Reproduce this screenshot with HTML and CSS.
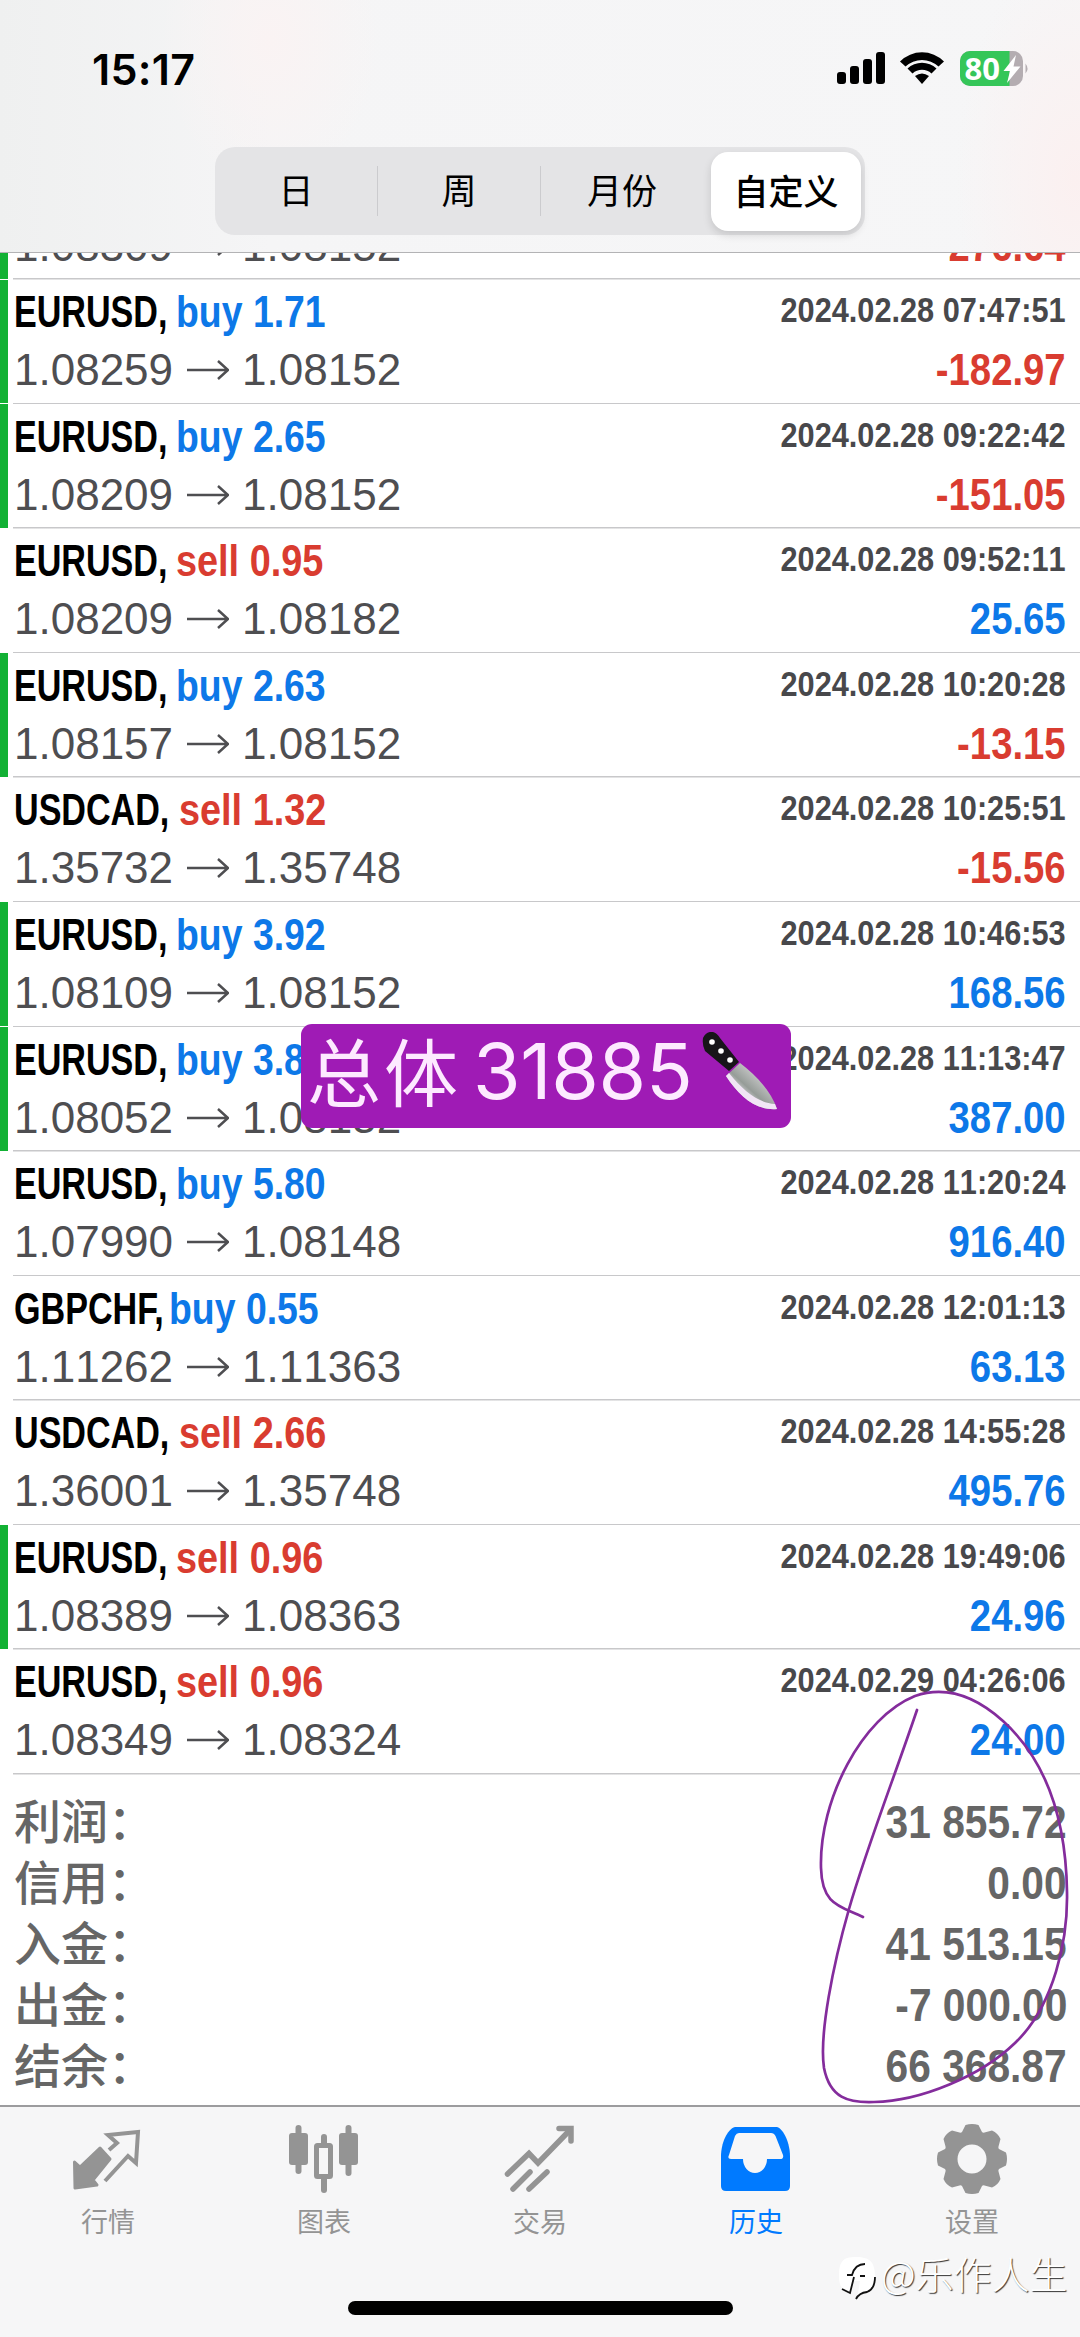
FILE: index.html
```html
<!DOCTYPE html>
<html lang="zh-CN">
<head>
<meta charset="utf-8">
<title>历史</title>
<link rel="stylesheet" href="styles.css">
</head>
<body>
<div class="screen">
  <header class="top">
    <div class="status">
      <span class="clock">15:17</span>
      <svg class="status-icons" width="194" height="38" viewBox="0 0 194 38">
        <rect x="1" y="22" width="9" height="12" rx="3"/><rect x="14" y="16" width="9" height="18" rx="3"/><rect x="27" y="9" width="9" height="25" rx="3"/><rect x="40" y="2" width="9" height="32" rx="3"/>
        <path d="M64 11.500A31 31 0 0 1 108 11.500L102.500 16.500A24 24 0 0 0 69.500 16.500ZM71.500 18.500A21 21 0 0 1 100.500 18.500L95.500 23.500A14 14 0 0 0 76.500 23.500ZM79 26Q86 21 93 26L86 34Z"/>
        <rect x="124" y="1" width="63" height="35" rx="10" fill="#b4adb1"/>
        <path d="M134 1H173.500V36H134A10 10 0 0 1 124 26V11A10 10 0 0 1 134 1Z" fill="#35c659"/>
        <path d="M189.500 13.500Q193.500 18.500 189.500 23.500Z" fill="#b4adb1"/>
        <text x="128.500" y="29.500" class="battery-text">80</text>
        <path d="M180 5L167.500 21H174L171 33L184.500 16.500H177.500Z" fill="#fff"/>
      </svg>
    </div>
    <nav class="segments">
      <span class="segment">日</span><i></i><span class="segment">周</span><i></i><span class="segment">月份</span><span class="segment selected">自定义</span>
    </nav>
  </header>

  <main class="history">
    <ul class="deals" id="deals"></ul>
    <dl class="summary">
      <div><dt>利润：</dt><dd>31 855.72</dd></div>
      <div><dt>信用：</dt><dd>0.00</dd></div>
      <div><dt>入金：</dt><dd>41 513.15</dd></div>
      <div><dt>出金：</dt><dd>-7 000.00</dd></div>
      <div><dt>结余：</dt><dd>66 368.87</dd></div>
    </dl>
  </main>

  <footer class="tabs">
    <nav class="tab-row">
      <a class="tab"><svg width="72" height="72" viewBox="0 0 72 72"><path fill="currentColor" stroke="currentColor" stroke-width="3" stroke-linejoin="round" d="M28 25L38 36L21 57L25 62L3 65L2.500 39L8 44Z"/><path fill="none" stroke="currentColor" stroke-width="4" d="M37 27L45 20L36 12L66 9L64 40L56 33L33 58"/></svg>行情</a>
      <a class="tab"><svg width="72" height="72" viewBox="0 0 72 72" fill="currentColor"><rect x="1" y="10" width="19" height="32" rx="3"/><rect x="7.500" y="2" width="6" height="49" rx="3"/><rect x="51" y="10" width="19" height="32" rx="3"/><rect x="57.500" y="2" width="6" height="51" rx="3"/><rect x="33" y="11" width="6" height="14" rx="3"/><rect x="33" y="52" width="6" height="18" rx="3"/><rect x="28.500" y="22.500" width="14" height="31" rx="1" fill="none" stroke="currentColor" stroke-width="5"/></svg>图表</a>
      <a class="tab"><svg width="72" height="72" viewBox="0 0 72 72" fill="none" stroke="currentColor" stroke-width="5.500" stroke-linecap="round"><path stroke-linejoin="miter" d="M3.500 51L25 30.500L34 40L66 7"/><path stroke-linejoin="miter" d="M55 5.500H67V18M9 66L26 49M25 66L43 49"/></svg>交易</a>
      <a class="tab active"><svg width="72" height="72" viewBox="0 0 72 72"><path fill="currentColor" d="M15 4H57C64 6 70 21 70 33V63Q70 68 65 68H6Q1 68 1 63V33C1 21 7 6 15 4Z"/><path fill="#f6f6f7" d="M19 10H51Q54 10 55.500 13L63 32Q64 36 60 36H47A12 14 0 0 1 23 36H11Q7 36 9 32L15 13Q16.500 10 19 10Z"/></svg>历史</a>
      <a class="tab"><svg width="72" height="72" viewBox="-36 -36 72 72"><path fill="currentColor" fill-rule="evenodd" d="M-6.500 -34Q0 -36 6.500 -34L10 -27Q11 -26 12.500 -26.500L20 -28.500Q26 -26 28.500 -20L26.500 -12.500Q26 -11 27 -10L34 -6.500Q36 0 34 6.500L27 10Q26 11 26.500 12.500L28.500 20Q26 26 20 28.500L12.500 26.500Q11 26 10 27L6.500 34Q0 36 -6.500 34L-10 27Q-11 26 -12.500 26.500L-20 28.500Q-26 26 -28.500 20L-26.500 12.500Q-26 11 -27 10L-34 6.500Q-36 0 -34 -6.500L-27 -10Q-26 -11 -26.500 -12.500L-28.500 -20Q-26 -26 -20 -28.500L-12.500 -26.500Q-11 -26 -10 -27ZM14.500 0A14.500 14.500 0 1 0 -14.500 0A14.500 14.500 0 1 0 14.500 0Z"/></svg>设置</a>
    </nav>
    <div class="home-bar"></div>
  </footer>

  <div class="note"><span class="note-label">总体</span><span class="note-number">31885</span>
    <svg class="knife" width="78" height="80" viewBox="0 0 78 80">
      <defs><linearGradient id="blade" x1="0" y1="1" x2="1" y2="0"><stop offset="0.300" stop-color="#e2dfe5"/><stop offset="0.450" stop-color="#969c98"/><stop offset="0.700" stop-color="#c8c9c9"/></linearGradient></defs>
      <path d="M38 31C53 42 69 59 75 77C54 79 37 64 24 44Z" fill="url(#blade)"/>
      <path d="M24 44C37 64 54 79 75 77L73 72C57 71 42 60 27 41Z" fill="#f1e5f5"/>
      <path d="M1 6Q4 -1 11 0Q15 1 18 6L37 30L27 39L3 19Q0 13 1 6Z" fill="#171519"/>
      <g fill="#fff"><circle cx="10" cy="10" r="2.800"/><circle cx="19" cy="19" r="2.800"/><circle cx="28" cy="28" r="2.800"/></g>
    </svg>
  </div>
  <svg class="scribble" width="260" height="426" viewBox="0 0 260 426"><path d="M107 20C85 85 56 160 39 219C23 275 9 345 14 378C20 408 38 413 64 412C111 411 171 386 205 353C244 316 258 250 257 202C256 130 236 70 193 31C163 4 134 -4 105 6C52 27 9 110 11 178C12 216 31 216 53 227" fill="none" stroke="#842c9c" stroke-width="2.700" stroke-linecap="round"/></svg>
  <div class="watermark">
    <svg width="40" height="46" viewBox="0 0 40 46"><path d="M19 2C34 2 38 8 38 22Q38 34 30 37Q24 39 20 44L23 26H17L14 38Q2 36 2 22C2 7 5 2 19 2Z" fill="#fff"/><path d="M10 20H15Q18 9 28 9M23 21H28M17 22L13 38L5 34M38 22Q38 34 30 37Q22 38 19 44" fill="none" stroke="#111" stroke-width="1.800"/></svg><span>@乐作人生</span>
  </div>
</div>
<script src="deals.js"></script>
</body>
</html>
```
FILE: styles.css
```css
* { box-sizing: border-box; }
body { margin: 0; background: #fff; font-family: "Liberation Sans", "Noto Sans CJK SC", sans-serif; font-kerning: none; }
.screen { position: relative; display: flex; flex-direction: column; width: 1080px; height: 2337px; overflow: hidden; background: #fff; }
.top { flex: none; height: 253px; border-bottom: 1px solid #b3b3b5; background: radial-gradient(ellipse 120px 230px at 1075px 180px, #fbf0f0, transparent), radial-gradient(ellipse 110px 150px at 270px 40px, #faf3f3, transparent), linear-gradient(90deg, #eff0f0, #f5f5f6 25%, #f6f6f7); }
.status { display: flex; justify-content: space-between; height: 147px; padding: 50px 50px 0 92px; }
.clock { font: 600 43px/38px Inter, sans-serif; letter-spacing: .3px; }
.battery-text { font: 700 31px "Noto Sans", sans-serif; fill: #fff; }
.segments { display: flex; align-items: center; width: 650px; height: 88px; margin: 0 auto; padding: 4px 4px 4px 0; border-radius: 20px; background: #e4e4e6; font: 400 35px/56px "Noto Sans CJK SC", sans-serif; }
.segments i { width: 1px; height: 50px; background: #cbcbce; }
.segment { flex: 0 0 162px; padding-bottom: 4px; text-align: center; }
.segment.selected { flex: 0 0 150px; margin-left: auto; height: 79px; line-height: 76px; border-radius: 17px; background: #fff; font-weight: 500; box-shadow: 0 4px 8px #0002; }
.history { flex: 1; overflow: hidden; }
.deals { margin: -98px 0 0; padding: 0; list-style: none; }
.deal { display: flex; justify-content: space-between; height: 124.580px; padding: 12.500px 14px 0 14px; background: linear-gradient(#c8c8ca, #c8c8ca) 13px 100% / 1067px 1.500px no-repeat; }
.deal.marked { background: linear-gradient(#fff, #fff) 0 100% / 8px 1px no-repeat, linear-gradient(#12b134, #12b134) 0 0 / 8px 100% no-repeat, linear-gradient(#c8c8ca, #c8c8ca) 13px 100% / 1067px 1.500px no-repeat; }
.title { display: flex; height: 58px; font: 700 44px/40px "Liberation Sans", sans-serif; white-space: pre; }
.title span { display: block; transform-origin: 0 50%; }
.symbol { transform: scaleX(.775); color: #000; }
.eurusd { width: 162px; }
.usdcad { width: 165px; }
.gbpchf { width: 155px; }
.side { transform: scaleX(.85); }
.side.sell { transform: scaleX(.86); }
.buy, .gain { color: #0d78e8; }
.sell, .loss { color: #d93c30; }
.prices { display: flex; align-items: center; color: #4e4e51; font-size: 44px; line-height: 40px; }
.prices svg { margin: 0 13px 0 14px; }
.right { text-align: right; font-weight: 700; white-space: nowrap; }
.right div { transform-origin: 100% 50%; transform: scaleX(.87); }
.right .date { height: 58px; font-size: 35.500px; line-height: 37px; color: #48484b; transform: scaleX(.865); }
.result { font-size: 44px; line-height: 40px; }
.summary { margin: 0; padding: 17px 13px 0 14px; color: #666; }
.summary div { display: flex; justify-content: space-between; height: 61px; line-height: 61px; }
.summary dt { font: 500 47px/54px "Noto Sans CJK SC", sans-serif; }
.summary dd { margin: 0; font-weight: 700; font-size: 46px; transform: scaleX(.885); transform-origin: 100% 50%; }
.tabs { flex: none; height: 232px; border-top: 2px solid #9c9c9e; background: #f6f6f7; }
.tab-row { display: flex; height: 194px; padding-top: 16px; }
.tab { display: flex; flex: 1; flex-direction: column; align-items: center; gap: 6px; color: #949494; font: 400 27px/40px "Noto Sans CJK SC", sans-serif; }
.tab.active { color: #007aff; }
.home-bar { width: 385px; height: 14px; margin: 0 auto; border-radius: 7px; background: #000; }
.note { position: absolute; left: 301px; top: 1024px; display: flex; width: 490px; height: 104px; padding-left: 6px; border-radius: 11px; background: #9f1bb5; color: #fdeaff; white-space: nowrap; }
.note-label { width: 166px; font: 400 74px/90px "Noto Sans CJK SC", sans-serif; letter-spacing: 3px; }
.note-number { width: 229px; font: 400 77px/94px Inter, sans-serif; letter-spacing: -.3px; }
.knife { flex: none; margin-top: 8px; }
.scribble { position: absolute; left: 810px; top: 1690px; }
.watermark { position: absolute; left: 837px; top: 2255px; display: flex; gap: 4px; color: #fff; font: 300 38px/36px "Noto Sans CJK SC", sans-serif; text-shadow: 1px 1px 1px #333; white-space: nowrap; }
```
FILE: deals.js
```javascript
const deals = [
  ["EURUSD", "buy", "2.63", "1.08309", "1.08152", "2024.02.28 06:31:20", "-276.64", true],
  ["EURUSD", "buy", "1.71", "1.08259", "1.08152", "2024.02.28 07:47:51", "-182.97", true],
  ["EURUSD", "buy", "2.65", "1.08209", "1.08152", "2024.02.28 09:22:42", "-151.05", true],
  ["EURUSD", "sell", "0.95", "1.08209", "1.08182", "2024.02.28 09:52:11", "25.65", false],
  ["EURUSD", "buy", "2.63", "1.08157", "1.08152", "2024.02.28 10:20:28", "-13.15", true],
  ["USDCAD", "sell", "1.32", "1.35732", "1.35748", "2024.02.28 10:25:51", "-15.56", false],
  ["EURUSD", "buy", "3.92", "1.08109", "1.08152", "2024.02.28 10:46:53", "168.56", true],
  ["EURUSD", "buy", "3.87", "1.08052", "1.08152", "2024.02.28 11:13:47", "387.00", true],
  ["EURUSD", "buy", "5.80", "1.07990", "1.08148", "2024.02.28 11:20:24", "916.40", false],
  ["GBPCHF", "buy", "0.55", "1.11262", "1.11363", "2024.02.28 12:01:13", "63.13", false],
  ["USDCAD", "sell", "2.66", "1.36001", "1.35748", "2024.02.28 14:55:28", "495.76", false],
  ["EURUSD", "sell", "0.96", "1.08389", "1.08363", "2024.02.28 19:49:06", "24.96", true],
  ["EURUSD", "sell", "0.96", "1.08349", "1.08324", "2024.02.29 04:26:06", "24.00", false]
];
const arrow = '<svg width="42" height="20" viewBox="0 0 42 20" fill="none" stroke="currentColor" stroke-width="2.500"><path d="M0 10H41M31 1L41 10L31 19"/></svg>';
document.getElementById("deals").innerHTML = deals.map(([symbol, side, volume, open, close, date, result, marked]) => `
  <li class="deal${marked ? " marked" : ""}">
    <div class="left">
      <div class="title"><span class="symbol ${symbol.toLowerCase()}">${symbol}, </span><span class="side ${side}">${side} ${volume}</span></div>
      <div class="prices">${open}${arrow}${close}</div>
    </div>
    <div class="right">
      <div class="date">${date}</div>
      <div class="result ${result.startsWith("-") ? "loss" : "gain"}">${result}</div>
    </div>
  </li>`).join("");
```
